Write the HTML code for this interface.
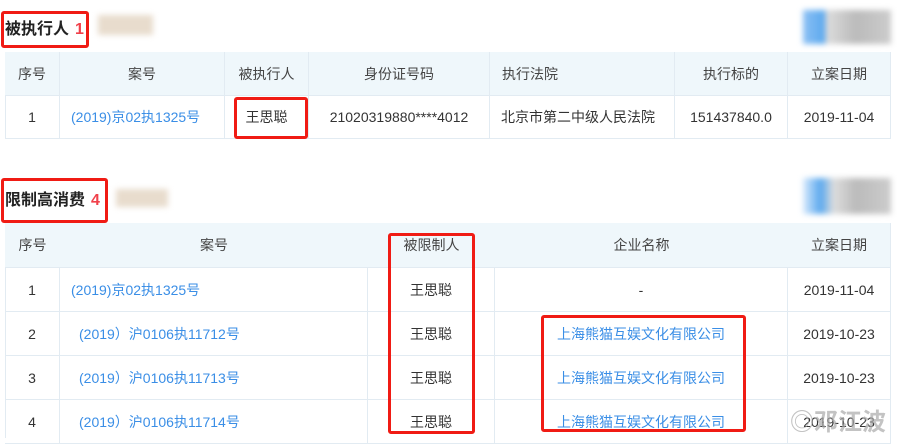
<!DOCTYPE html>
<html><head><meta charset="utf-8"><style>
body{margin:0;width:906px;height:438px;background:#fff;position:relative;overflow:hidden;font-family:"Liberation Sans","Noto Sans CJK SC",sans-serif;font-size:14px;color:#333}
.a{position:absolute}
.t{font-size:16px;font-weight:bold;color:#222}
.t b{color:#f0414b;margin-left:6px}
.blur{filter:blur(3px)}
.rb{position:absolute;border:3px solid #f01b14;border-radius:3px;box-sizing:border-box}
.c{position:absolute;display:flex;align-items:center;justify-content:center;box-sizing:border-box;border-right:1px solid #e2ebf2;border-bottom:1px solid #e2ebf2;white-space:nowrap}
.h{background:#eff7fb;color:#444}
.l{color:#3a8ee6}
</style></head><body>
<div class="a t" style="left:5px;top:15px">被执行人<b>1</b></div>
<div class="a blur" style="left:98px;top:15px;width:55px;height:20px;background:#e8dccd"></div>
<div class="a blur" style="left:803px;top:10px;width:88px;height:34px;background:linear-gradient(90deg,#8cc0f4 0,#5aa8ee 25%,#ddd 26%,#bbb 60%,#ccc 100%)"></div>
<div class="a" style="left:5px;top:52px;width:886px;height:86px;border-left:1px solid #e2ebf2;border-top:1px solid #e2ebf2;box-sizing:border-box"></div>
<div class="c h" style="left:5px;top:52px;width:55px;height:44px">序号</div>
<div class="c h" style="left:60px;top:52px;width:165px;height:44px">案号</div>
<div class="c h" style="left:225px;top:52px;width:84px;height:44px">被执行人</div>
<div class="c h" style="left:309px;top:52px;width:181px;height:44px">身份证号码</div>
<div class="c h" style="left:490px;top:52px;width:185px;height:44px;justify-content:flex-start;padding-left:12px">执行法院</div>
<div class="c h" style="left:675px;top:52px;width:113px;height:44px">执行标的</div>
<div class="c h" style="left:788px;top:52px;width:103px;height:44px">立案日期</div>
<div class="c" style="left:5px;top:96px;width:55px;height:43px">1</div>
<div class="c l" style="left:60px;top:96px;width:165px;height:43px;justify-content:flex-start;padding-left:11px">(2019)京02执1325号</div>
<div class="c" style="left:225px;top:96px;width:84px;height:43px">王思聪</div>
<div class="c" style="left:309px;top:96px;width:181px;height:43px">21020319880****4012</div>
<div class="c" style="left:490px;top:96px;width:185px;height:43px;justify-content:flex-start;padding-left:11px">北京市第二中级人民法院</div>
<div class="c" style="left:675px;top:96px;width:113px;height:43px">151437840.0</div>
<div class="c" style="left:788px;top:96px;width:103px;height:43px">2019-11-04</div>

<div class="a t" style="left:5px;top:186px">限制高消费<b>4</b></div>
<div class="a blur" style="left:116px;top:189px;width:52px;height:18px;background:#e8dccd"></div>
<div class="a blur" style="left:803px;top:178px;width:88px;height:36px;background:linear-gradient(90deg,#d8eafc 0,#5aa8ee 20%,#ddd 35%,#bbb 60%,#ccc 100%)"></div>
<div class="a" style="left:5px;top:223px;width:886px;height:215px;border-left:1px solid #e2ebf2;border-top:1px solid #e2ebf2;box-sizing:border-box"></div>
<div class="c h" style="left:5px;top:223px;width:55px;height:45px;border-right:none">序号</div>
<div class="c h" style="left:60px;top:223px;width:308px;height:45px;border-right:none">案号</div>
<div class="c h" style="left:368px;top:223px;width:127px;height:45px;border-right:none">被限制人</div>
<div class="c h" style="left:495px;top:223px;width:293px;height:45px;border-right:none">企业名称</div>
<div class="c h" style="left:788px;top:223px;width:103px;height:45px">立案日期</div>
<div class="c" style="left:5px;top:268px;width:55px;height:44px">1</div>
<div class="c l" style="left:60px;top:268px;width:308px;height:44px;justify-content:flex-start;padding-left:11px">(2019)京02执1325号</div>
<div class="c" style="left:368px;top:268px;width:127px;height:44px">王思聪</div>
<div class="c" style="left:495px;top:268px;width:293px;height:44px">-</div>
<div class="c" style="left:788px;top:268px;width:103px;height:44px">2019-11-04</div>
<div class="c" style="left:5px;top:312px;width:55px;height:44px">2</div>
<div class="c l" style="left:60px;top:312px;width:308px;height:44px;justify-content:flex-start;padding-left:19px">(2019）沪0106执11712号</div>
<div class="c" style="left:368px;top:312px;width:127px;height:44px">王思聪</div>
<div class="c l" style="left:495px;top:312px;width:293px;height:44px">上海熊猫互娱文化有限公司</div>
<div class="c" style="left:788px;top:312px;width:103px;height:44px">2019-10-23</div>
<div class="c" style="left:5px;top:356px;width:55px;height:44px">3</div>
<div class="c l" style="left:60px;top:356px;width:308px;height:44px;justify-content:flex-start;padding-left:19px">(2019）沪0106执11713号</div>
<div class="c" style="left:368px;top:356px;width:127px;height:44px">王思聪</div>
<div class="c l" style="left:495px;top:356px;width:293px;height:44px">上海熊猫互娱文化有限公司</div>
<div class="c" style="left:788px;top:356px;width:103px;height:44px">2019-10-23</div>
<div class="c" style="left:5px;top:400px;width:55px;height:44px">4</div>
<div class="c l" style="left:60px;top:400px;width:308px;height:44px;justify-content:flex-start;padding-left:19px">(2019）沪0106执11714号</div>
<div class="c" style="left:368px;top:400px;width:127px;height:44px">王思聪</div>
<div class="c l" style="left:495px;top:400px;width:293px;height:44px">上海熊猫互娱文化有限公司</div>
<div class="c" style="left:788px;top:400px;width:103px;height:44px">2019-10-23</div>
<div class="a" style="left:790px;top:402px;font-size:24px;color:rgba(170,170,170,.7);font-weight:bold">◎邓江波</div>

<div class="rb" style="left:1px;top:11px;width:88px;height:37px"></div>
<div class="rb" style="left:234px;top:97px;width:74px;height:42px"></div>
<div class="rb" style="left:1px;top:178px;width:107px;height:45px"></div>
<div class="rb" style="left:388px;top:233px;width:87px;height:201px"></div>
<div class="rb" style="left:541px;top:315px;width:205px;height:117px"></div>
</body></html>
